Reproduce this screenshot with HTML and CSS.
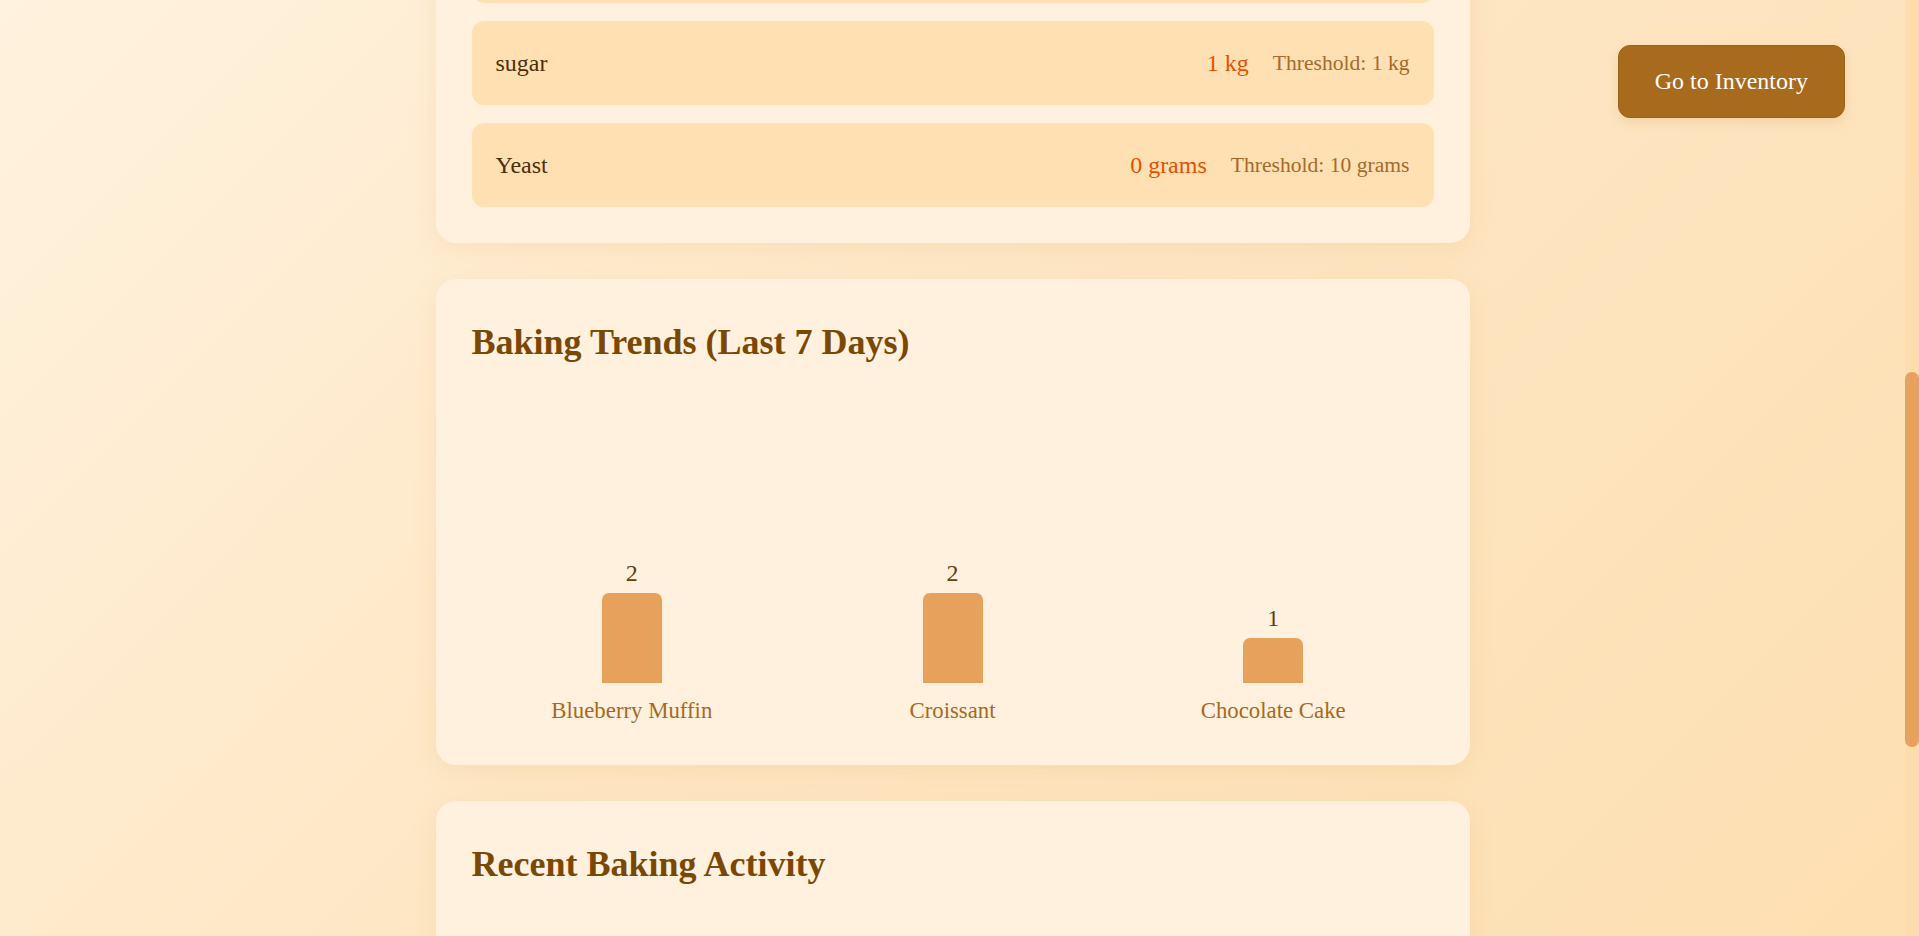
FILE: index.html
```html
<!DOCTYPE html>
<html lang="en">
<head>
<meta charset="utf-8">
<title>Bakery Dashboard</title>
<link rel="stylesheet" href="styles.css">
</head>
<body>
<div class="app">
  <div class="page">
    <a class="inventory-btn" href="#">Go to Inventory</a>
    <main class="viewport" id="viewport">
      <div class="dashboard">
        <section class="card">
          <h2 class="card-title">Low Stock Alerts</h2>
          <ul class="stock-list">
            <li class="stock-row"><span class="stock-name">Butter</span><span class="stock-meta"><span class="stock-qty">1 kg</span><span class="stock-threshold">Threshold: 2 kg</span></span></li>
            <li class="stock-row"><span class="stock-name">sugar</span><span class="stock-meta"><span class="stock-qty">1 kg</span><span class="stock-threshold">Threshold: 1 kg</span></span></li>
            <li class="stock-row"><span class="stock-name">Yeast</span><span class="stock-meta"><span class="stock-qty">0 grams</span><span class="stock-threshold">Threshold: 10 grams</span></span></li>
          </ul>
        </section>

        <section class="card">
          <h2 class="card-title">Baking Trends (Last 7 Days)</h2>
          <div class="chart">
            <div class="chart-col">
              <span class="chart-value">2</span>
              <div class="chart-bar" style="height: 90px"></div>
              <span class="chart-label">Blueberry Muffin</span>
            </div>
            <div class="chart-col">
              <span class="chart-value">2</span>
              <div class="chart-bar" style="height: 90px"></div>
              <span class="chart-label">Croissant</span>
            </div>
            <div class="chart-col">
              <span class="chart-value">1</span>
              <div class="chart-bar" style="height: 45px"></div>
              <span class="chart-label">Chocolate Cake</span>
            </div>
          </div>
        </section>

        <section class="card card-activity">
          <h2 class="card-title">Recent Baking Activity</h2>
        </section>
      </div>
    </main>
  </div>
  <div class="scroll-rail"><div class="scroll-thumb"></div></div>
</div>
<script src="script.js"></script>
</body>
</html>
```

FILE: styles.css
```css
html,
body {
  margin: 0;
  height: 100%;
  overflow: hidden;
}

html {
  background: linear-gradient(135deg, #fff2de 0%, #fee6c3 50%, #fddfb1 100%);
}

body {
  font-family: "Liberation Serif", "Times New Roman", serif;
  font-size: 24px;
  color: #5a3410;
}

.app {
  display: flex;
  height: 100vh;
}

.page {
  flex: 1;
  min-width: 0;
  position: relative;
}

.viewport {
  display: block;
  height: 100%;
  overflow-y: auto;
  scrollbar-width: none;
}

.viewport::-webkit-scrollbar {
  display: none;
}

.scroll-rail {
  width: 14px;
  flex: 0 0 14px;
  background: #fddcae;
  display: flex;
  flex-direction: column;
}

.scroll-thumb {
  margin-top: 372px;
  height: 375px;
  background: #e6a15d;
  border-radius: 7px;
}

.inventory-btn {
  position: absolute;
  top: 45px;
  right: 60px;
  z-index: 10;
  display: block;
  padding: 22px 36px;
  line-height: 27px;
  background: #a86a1d;
  color: #ffffff;
  text-decoration: none;
  border-radius: 12px;
  border: 1px solid #9c6019;
  box-shadow: 0 4px 12px rgba(168, 106, 29, 0.15);
  font-size: 24px;
}

.dashboard {
  width: 1034px;
  margin: 0 auto;
  padding: 36px 0;
  display: flex;
  flex-direction: column;
  gap: 36px;
}

.card {
  background: #fff1de;
  border-radius: 20px;
  padding: 36px;
  box-shadow: 0 6px 24px rgba(222, 160, 80, 0.16);
}

.card-activity {
  min-height: 200px;
}

.card-title {
  margin: 0 0 24px;
  font-size: 36px;
  line-height: 54px;
  color: #7b4804;
}

.stock-list {
  list-style: none;
  margin: 0;
  padding: 0;
  display: flex;
  flex-direction: column;
  gap: 18px;
}

.stock-row {
  display: flex;
  justify-content: space-between;
  align-items: center;
  box-sizing: border-box;
  height: 84px;
  background: #fee0b3;
  border-radius: 12px;
  padding: 0 24px;
  line-height: 28px;
}

.stock-name {
  color: #4e2d0c;
}

.stock-meta {
  display: flex;
  align-items: center;
  gap: 24px;
}

.stock-qty {
  color: #e65100;
}

.stock-threshold {
  font-size: 21.6px;
  color: #a8692a;
}

.chart {
  height: 336px;
  box-sizing: border-box;
  padding-bottom: 5px;
  display: flex;
  align-items: flex-end;
}

.chart-col {
  flex: 1;
  display: flex;
  flex-direction: column;
  align-items: center;
}

.chart-value {
  font-size: 24px;
  line-height: 28px;
  margin-bottom: 6px;
  color: #6a3d0c;
}

.chart-bar {
  width: 60px;
  background: #e6a15d;
  border-radius: 7px 7px 0 0;
}

.chart-label {
  margin-top: 15px;
  font-size: 22.8px;
  line-height: 26px;
  color: #a8691f;
}
```

FILE: script.js
```js
(function () {
  var viewport = document.getElementById('viewport');
  function restore() {
    viewport.scrollTop = 231;
  }
  restore();
  window.addEventListener('load', restore);
})();
```
